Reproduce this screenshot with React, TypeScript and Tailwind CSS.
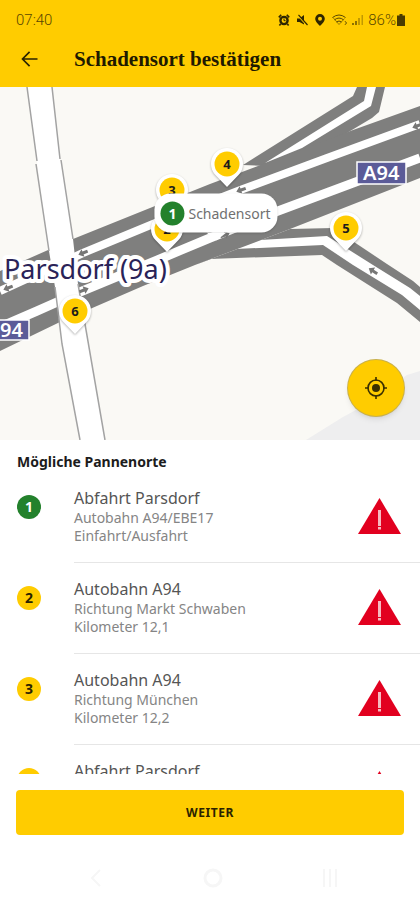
import { useState } from "react";

type Place = {
  id: number;
  title: string;
  road: string;
  detail: string;
};

type PinData = { id: number; x: number; y: number };

const MAP_WIDTH = 420;
const MAP_HEIGHT = 353;

const places: Place[] = [
  { id: 1, title: "Abfahrt Parsdorf", road: "Autobahn A94/EBE17", detail: "Einfahrt/Ausfahrt" },
  { id: 2, title: "Autobahn A94", road: "Richtung Markt Schwaben", detail: "Kilometer 12,1" },
  { id: 3, title: "Autobahn A94", road: "Richtung München", detail: "Kilometer 12,2" },
  { id: 4, title: "Abfahrt Parsdorf", road: "Autobahn A94/EBE17", detail: "Einfahrt/Ausfahrt" },
];

// x / y is the tip of the pin on the map
const pins: PinData[] = [
  { id: 3, x: 172, y: 126 },
  { id: 2, x: 167, y: 165 },
  { id: 4, x: 227, y: 100 },
  { id: 5, x: 346, y: 164 },
  { id: 6, x: 75, y: 247 },
];

const percent = (value: number, total: number) => `${(value / total) * 100}%`;

const StatusBar = () => (
  <div className="flex h-9 items-center justify-between pt-1 pr-[15px] pl-4 font-['Roboto',sans-serif] text-[15px] font-light text-[#5a4700]">
    <span>07:40</span>
    <div className="flex items-center gap-[6px] text-[#2f2600]">
      <svg className="h-3 w-3" viewBox="0 0 12 12" fill="none" stroke="currentColor">
        <circle cx="6" cy="6.5" r="3.6" strokeWidth="2.4" />
        <path d="M.8 3.4 3.2.8M11.2 3.4 8.8.8M2.6 10 1.4 11.5M9.4 10l1.2 1.5" strokeWidth="1.6" />
        <path d="M6 4.5v2.2h1.6" strokeWidth="1" />
      </svg>
      <svg className="h-3 w-3" viewBox="0 0 12 12" fill="currentColor">
        <path d="M1 4.5h2.5L8 1v9.5L3.5 8H1z" />
        <path d="M1.5.8 11 11.5" stroke="#fc0" strokeWidth="1.6" />
        <path d="M2.5.8 11.5 11" stroke="currentColor" strokeWidth="1.2" />
      </svg>
      <svg className="h-3 w-3" viewBox="0 0 12 12" fill="currentColor" fillRule="evenodd">
        <path d="M6 0a4.8 4.8 0 0 1 4.8 4.8C10.8 8 6 12 6 12S1.2 8 1.2 4.8A4.8 4.8 0 0 1 6 0Zm0 2.8a2 2 0 1 0 0 4 2 2 0 0 0 0-4Z" />
      </svg>
      <div className="flex items-center gap-1">
        <svg className="h-3 w-4" viewBox="0 0 16 12" fill="none" stroke="currentColor" opacity=".8">
          <path d="M.5 3.5Q7-1.5 13.5 3.5M2.5 5.8Q7 2.3 11.5 5.8M4.5 8Q7 6 9.5 8" />
          <path d="m1 3.5 6 7 5.500-6" strokeWidth=".6" />
          <path d="m13 7.200 1.500 1.800-1.500 1.800" />
        </svg>
        <svg className="h-3 w-3" viewBox="0 0 12 12" fill="currentColor">
          <path d="M0 9h2v2H0zM3 7h2v4H3z" opacity=".55" />
          <path d="M6 4h2v7H6zM9.5 1H11v10H9.500z" opacity=".3" />
        </svg>
        <div className="flex items-center text-[#5a4700]">
          <span>86%</span>
          <svg className="ml-px h-3 w-2" viewBox="0 0 8 12" fill="#4a3b00">
            <path d="M2.500 0h3v1.500H8V12H0V1.500h2.500z" />
          </svg>
        </div>
      </div>
    </div>
  </div>
);

const Pin = ({ id, x, y }: PinData) => (
  <button
    type="button"
    aria-label={`Pannenort ${id}`}
    className="absolute h-10 w-8 -translate-x-1/2 -translate-y-full"
    style={{ left: percent(x, MAP_WIDTH), top: percent(y, MAP_HEIGHT) }}>
    <svg
      className="absolute inset-0 h-full w-full overflow-visible drop-shadow-[0_1px_1px_rgba(0,0,0,0.3)]"
      viewBox="0 0 32 40">
      <path d="M16 40 4.500 28A16 16 0 1 1 27.500 28Z" fill="#fff" />
      <circle cx="16" cy="17" r="12.500" fill="#fc0" />
    </svg>
    <span className="absolute inset-x-0 top-0 text-center text-[13px] leading-[34px] font-bold text-[#1c1c1c]">
      {id}
    </span>
  </button>
);

const Arrow = ({ x, y, angle }: { x: number; y: number; angle: number }) => (
  <path
    d="M-5 0 0-4v2.500h5v3H0V4Z"
    fill="#777776"
    transform={`translate(${x} ${y}) rotate(${angle})`}
  />
);

const RoadMap = () => (
  <svg className="absolute inset-0 h-full w-full" viewBox="0 0 420 353">
    <rect width="420" height="353" fill="#faf9f5" />
    <path d="M306 353 343 330 367 317 407 288 420 284V353Z" fill="#eeeeef" />

    {/* ramps */}
    <path d="M357 0 353 9 243 78 290 80 372 31 379 25 385 0Z" fill="#7f7f7e" />
    <path
      d="M195 178 290 142 333 141 387 177 413 194 420 200V235L397 216 337 178 322 168 210 172Z"
      fill="#7f7f7e"
    />
    <path d="M235 162 260 153 327 149 373 178 410 201 420 209V223L402 208 353 178 323 158Z" fill="#fff" />

    {/* motorway */}
    <path d="M0 184 30 171 73 152 155 119 210 97 353 43 420 19V91L290 142 195 178 143 199 60 235 0 264Z" fill="#7f7f7e" />
    <path d="M367 0h9L371 19 302 61 265 76 364 14Z" fill="#fff" />
    <path d="M0 204 83 166 153 137 243 102 327 71 420 37" fill="none" stroke="#fff" strokeWidth="8" />
    <path d="M0 240 37 224 80 205 167 169 210 151 278 124 353 96 420 71" fill="none" stroke="#fff" strokeWidth="9" />

    {/* country road */}
    <path d="M27 0 37 75 49 164 55 200 62 257 80 353H105L85 237 78 197 73 152 60 72 52 0Z" fill="#fff" />
    <path
      d="M27 0 37 74M36 77 49 164M55 200 62 257 80 353M52 0 60 72M61 73 73 152M78 197 85 237 105 353"
      fill="none"
      stroke="#a3a3a3"
      strokeWidth="1.500"
    />

    <Arrow x={8} y={201} angle={-22} />
    <Arrow x={83} y={166} angle={-22} />
    <Arrow x={84} y={203} angle={158} />
    <Arrow x={241} y={103} angle={-20} />
    <Arrow x={417} y={39} angle={-20} />
    <Arrow x={225} y={148} angle={158} />
    <Arrow x={373} y={184} angle={32} />

    <text
      x="4"
      y="192"
      fill="#2a2358"
      stroke="#fff"
      strokeWidth="8"
      strokeLinejoin="round"
      paintOrder="stroke"
      className="font-['Noto_Sans',sans-serif] text-[27px]">
      Parsdorf (9a)
    </text>

    <g className="font-['Noto_Sans',sans-serif] text-[20px] font-semibold" fill="#fff">
      <rect x="357" y="75" width="49" height="22" fill="#5b5b98" stroke="#fff" strokeWidth="1.500" />
      <text x="363" y="93">A94</text>
      <rect x="-20" y="233" width="49" height="20" fill="#5b5b98" stroke="#fff" strokeWidth="1.500" />
      <text x="0" y="250">94</text>
    </g>
  </svg>
);

const WarningIcon = () => (
  <svg className="h-9 w-[43px] shrink-0" viewBox="0 0 43 36" role="img" aria-label="Warnung">
    <path d="M21.500 0 43 36H0Z" fill="#e2001f" />
    <path d="M20 12h3v16h-3zM20 29h3v2.500h-3z" fill="#f6b9c0" />
  </svg>
);

const App = () => {
  const [selectedId, setSelectedId] = useState(1);

  return (
    <div className="flex h-screen w-full flex-col bg-white font-['Noto_Sans',sans-serif]">
      <header className="shrink-0 bg-[#fc0]">
        <StatusBar />
        <div className="flex h-[51px] items-center pb-[6px] pl-[18px]">
          <button type="button" aria-label="Zurück" className="flex h-6 w-6 items-center justify-center">
            <svg className="h-5 w-5" viewBox="0 0 24 24" fill="none" stroke="#2b2300" strokeWidth="2">
              <path d="M21 12H3.500M11.500 3.500 3 12l8.500 8.500" />
            </svg>
          </button>
          <h1 className="ml-8 font-['Liberation_Serif',serif] text-[21px] leading-6 font-bold text-[#1f1a00]">
            Schadensort bestätigen
          </h1>
        </div>
      </header>

      <section aria-label="Karte" className="relative aspect-[420/353] w-full shrink-0 overflow-hidden">
        <RoadMap />
        {pins.map((pin) => (
          <Pin key={pin.id} {...pin} />
        ))}
        <div
          className="absolute flex h-[39px] -translate-x-1/2 -translate-y-1/2 items-center gap-1 rounded-2xl bg-white pr-[7px] pl-[6px] shadow-sm"
          style={{ left: percent(216, MAP_WIDTH), top: percent(126, MAP_HEIGHT) }}>
          <span className="flex h-6 w-6 items-center justify-center rounded-full bg-[#23812c] text-sm font-bold text-white">
            1
          </span>
          <span className="text-sm text-[#707070]">Schadensort</span>
          <svg className="absolute top-full left-1/2 h-2 w-5 -translate-x-1/2" viewBox="0 0 20 8">
            <path d="M0 0h20L10 8Z" fill="#fff" />
          </svg>
        </div>
        <button
          type="button"
          aria-label="Mein Standort"
          className="absolute right-4 bottom-6 flex h-14 w-14 items-center justify-center rounded-full bg-[#fc0] shadow-md ring-1 ring-[#c9b04a]">
          <svg className="h-6 w-6" viewBox="0 0 24 24" fill="none" stroke="#3a2f00" strokeWidth="1.600">
            <circle cx="12" cy="12" r="8" />
            <circle cx="12" cy="12" r="4" fill="#3a2f00" stroke="none" />
            <path d="M12 1v4M12 19v4M1 12h4M19 12h4" />
          </svg>
        </button>
      </section>

      <main className="flex min-h-0 flex-1 flex-col">
        <h2 className="shrink-0 px-[17px] pt-[13px] pb-px text-sm leading-[18px] font-bold text-[#1c1c1c]">
          Mögliche Pannenorte
        </h2>
        <ul className="min-h-0 flex-1 overflow-y-auto [scrollbar-width:none]">
          {places.map((place) => (
            <li key={place.id}>
              <button
                type="button"
                onClick={() => setSelectedId(place.id)}
                className="flex w-full items-start pl-[17px] text-left">
                <span
                  className={
                    place.id === selectedId
                      ? "mt-[23px] flex h-6 w-6 shrink-0 items-center justify-center rounded-full bg-[#23812c] text-sm font-bold text-white"
                      : "mt-[23px] flex h-6 w-6 shrink-0 items-center justify-center rounded-full bg-[#fc0] text-sm font-bold text-[#2b2300]"
                  }>
                  {place.id}
                </span>
                <span className="ml-[33px] flex flex-1 items-start justify-between border-b border-[#e6e6e6] pt-4 pr-[19px] pb-[17px]">
                  <span className="flex flex-col text-sm leading-[18px] text-[#858585]">
                    <span className="text-base leading-[21px] text-[#555]">{place.title}</span>
                    <span>{place.road}</span>
                    <span>{place.detail}</span>
                  </span>
                  <span className="mt-[10px]">
                    <WarningIcon />
                  </span>
                </span>
              </button>
            </li>
          ))}
        </ul>
      </main>

      <footer className="shrink-0 px-4 pt-4">
        <button
          type="button"
          className="h-[45px] w-full rounded-sm bg-[#fc0] text-xs font-bold tracking-wider text-[#2b2300]">
          WEITER
        </button>
        <nav className="flex h-[65px] items-center justify-between pt-5 pr-16 pl-[70px] text-[#f6f6f6]">
          <button type="button" aria-label="Zurück">
            <svg className="h-5 w-5" viewBox="0 0 20 20" fill="none" stroke="currentColor" strokeWidth="2">
              <path d="M14 2 6 10l8 8" />
            </svg>
          </button>
          <button type="button" aria-label="Startseite">
            <svg className="h-5 w-5" viewBox="0 0 20 20" fill="none" stroke="currentColor" strokeWidth="3">
              <circle cx="10" cy="10" r="8" />
            </svg>
          </button>
          <button type="button" aria-label="Letzte Apps">
            <svg className="h-5 w-5" viewBox="0 0 20 20" fill="none" stroke="currentColor" strokeWidth="2">
              <path d="M4 1v18M10 1v18M16 1v18" />
            </svg>
          </button>
        </nav>
      </footer>
    </div>
  );
};

export default App;
